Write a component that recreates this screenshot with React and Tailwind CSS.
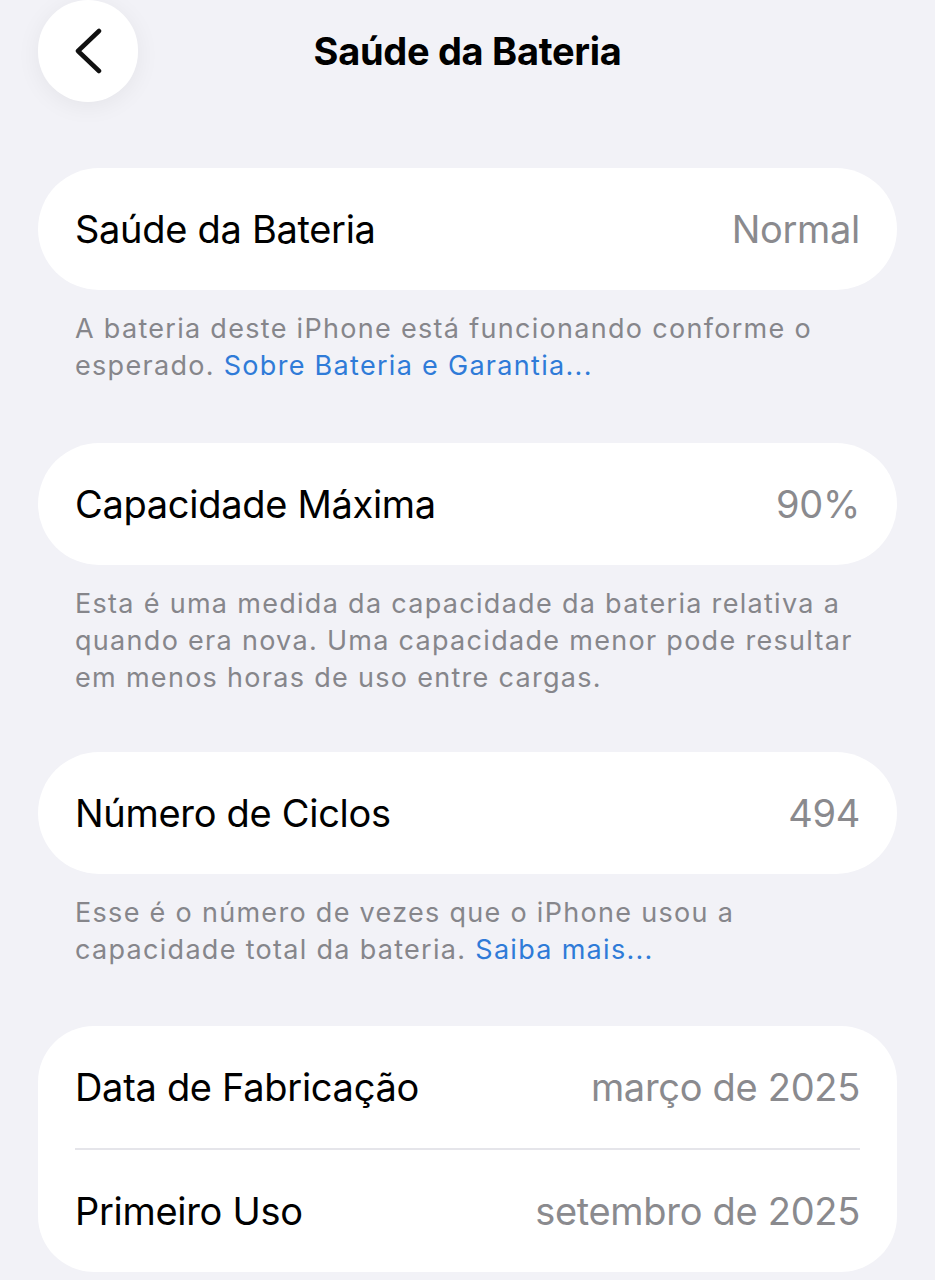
import React from 'react';

const font = { fontFamily: 'Inter, "Noto Sans", sans-serif' };

const Row = ({ label, value }) => (
  <div className="flex h-[122px] items-center justify-between px-[37px]">
    <span className="text-[38px] tracking-[-0.3px] text-black">{label}</span>
    <span className="text-[38px] tracking-[-0.3px] text-[#8a8a8e]">{value}</span>
  </div>
);

const Card = ({ children }) => (
  <div className="mx-[38px] rounded-full bg-white">{children}</div>
);

const Note = ({ children }) => (
  <p className="mx-[75px] mt-[20px] text-[27px] leading-[37px] tracking-[1.3px] text-[#86868b]">
    {children}
  </p>
);

export default function App() {
  return (
    <div className="min-h-[1280px] bg-[#f2f2f7] pb-10" style={font}>
      <header className="relative flex h-[102px] items-center justify-center">
        <button className="absolute left-[38px] top-0 flex h-[102px] w-[100px] items-center justify-center rounded-full bg-white shadow-[0_4px_24px_rgba(0,0,0,0.06)]">
          <svg width="30" height="46" viewBox="0 0 30 46" fill="none">
            <path d="M26 3 L5 23 L26 43" stroke="#111" strokeWidth="4.5" strokeLinecap="round" strokeLinejoin="round" />
          </svg>
        </button>
        <h1 className="text-[38px] font-bold tracking-[-0.3px] text-black">Saúde da Bateria</h1>
      </header>

      <div className="mt-[66px]">
        <Card><Row label="Saúde da Bateria" value="Normal" /></Card>
        <Note>
          A bateria deste iPhone está funcionando conforme o esperado.{' '}
          <span className="text-[#2f7bd8]">Sobre Bateria e Garantia...</span>
        </Note>
      </div>

      <div className="mt-[59px]">
        <Card><Row label="Capacidade Máxima" value="90%" /></Card>
        <Note>
          Esta é uma medida da capacidade da bateria relativa a quando era nova. Uma capacidade menor pode resultar em menos horas de uso entre cargas.
        </Note>
      </div>

      <div className="mt-[56px]">
        <Card><Row label="Número de Ciclos" value="494" /></Card>
        <Note>
          Esse é o número de vezes que o iPhone usou a capacidade total da bateria.{' '}
          <span className="text-[#2f7bd8]">Saiba mais...</span>
        </Note>
      </div>

      <div className="mx-[38px] mt-[58px] rounded-[56px] bg-white">
        <Row label="Data de Fabricação" value="março de 2025" />
        <div className="mx-[37px] h-[2px] bg-[#e5e5ea]" />
        <Row label="Primeiro Uso" value="setembro de 2025" />
      </div>
    </div>
  );
}
